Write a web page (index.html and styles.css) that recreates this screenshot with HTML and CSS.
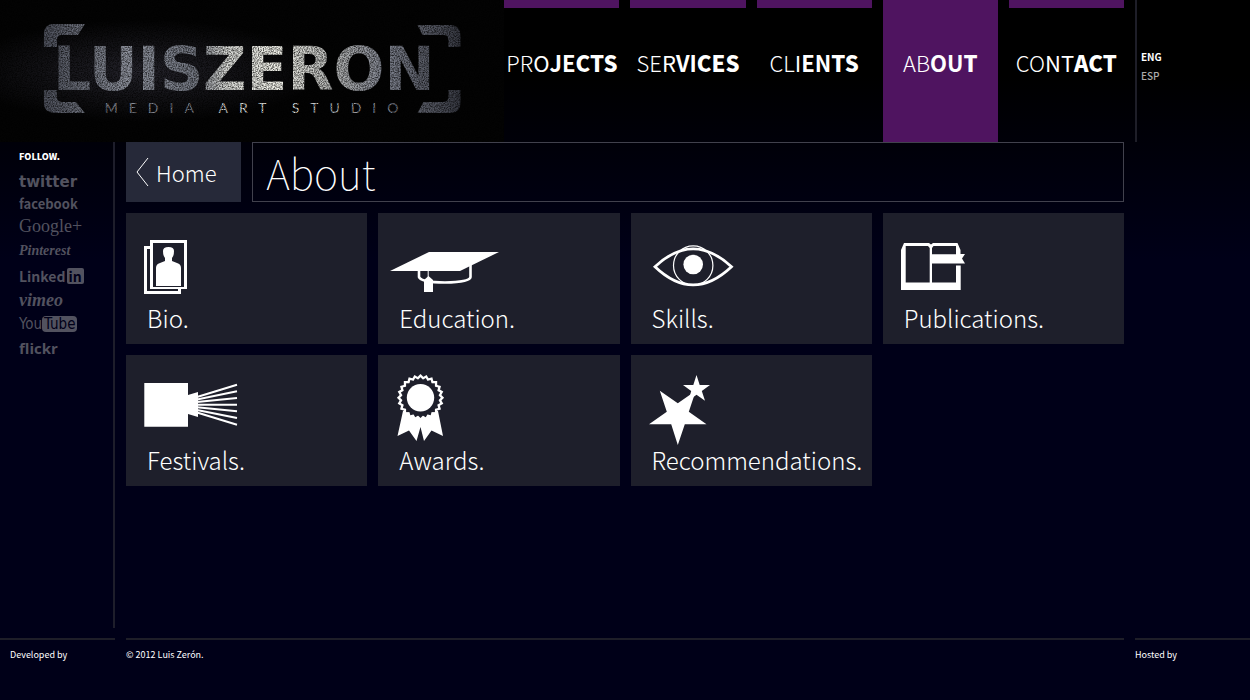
FILE: index.html
```html
<!DOCTYPE html>
<html lang="en">
	<head>
	<meta charset="utf-8" />
	<meta name="viewport" content="width=device-width, initial-scale=1"/>
	<title>Luis Zerón - About</title>
	<link rel="stylesheet" href="styles.css">
	</head>

	<body>
	<header class="top">
		<a class="logo" href="#">
			<svg viewBox="0 0 505 142">
				<defs>
					<linearGradient id="shine" gradientUnits="userSpaceOnUse" x1="44" y1="0" x2="462" y2="0">
						<stop offset="0" stop-color="#4b4e59"/>
						<stop offset=".2" stop-color="#8d919c"/>
						<stop offset=".36" stop-color="#747883"/>
						<stop offset=".44" stop-color="#d9dad6"/>
						<stop offset=".56" stop-color="#f0f0e8"/>
						<stop offset=".68" stop-color="#b9bab8"/>
						<stop offset=".82" stop-color="#7e828e"/>
						<stop offset="1" stop-color="#34363f"/>
					</linearGradient>
					<radialGradient id="glow" cx=".28" cy=".5" r=".36">
						<stop offset="0" stop-color="#25242c"/>
						<stop offset="1" stop-color="#030303"/>
					</radialGradient>
					<filter id="grain" x="0" y="0" width="100%" height="100%">
						<feTurbulence type="fractalNoise" baseFrequency=".8" numOctaves="2"/>
						<feColorMatrix values="0 0 0 0 0  0 0 0 0 0  0 0 0 0 0  1.6 0 0 0 -.55"/>
					</filter>
				</defs>
				<rect width="505" height="142" fill="url(#glow)"/>
				<g fill="url(#shine)">
					<path d="M44 47V34Q44 24 54 24H85L78 35H62Q57 35 57 40V47Z"/>
					<path d="M44 90H57V97Q57 102 63 102H76L85 113H56Q44 113 44 103Z"/>
					<path d="M418 25H450Q461 25 461 36V47H449V40Q449 35 444 35H423Z"/>
					<path d="M449 90H461V102Q461 113 450 113H418L424 102H443Q449 102 449 97Z"/>
					<text class="logo-name" x="53" y="90">LUISZERON</text>
					<text class="logo-line" x="105" y="113">MEDIA ART STUDIO</text>
				</g>
				<rect width="505" height="142" filter="url(#grain)"/>
			</svg>
		</a>
		<nav class="menu">
			<a href="#"><span><i>PR</i>O<b>JE</b><strong>CTS</strong></span></a>
			<a href="#"><span><i>SE</i>R<b>VI</b><strong>CES</strong></span></a>
			<a href="#"><span><i>CL</i>I<b>EN</b><strong>TS</strong></span></a>
			<a href="#" class="active"><span><i>AB</i><b>OU</b><strong>T</strong></span></a>
			<a href="#"><span><i>CO</i>NT<strong>ACT</strong></span></a>
		</nav>
		<div class="lang">
			<a href="#" class="current">ENG</a>
			<a href="#">ESP</a>
		</div>
	</header>

	<div class="middle">
		<aside class="follow">
			<h2>FOLLOW.</h2>
			<a href="#" class="twitter">twitter</a>
			<a href="#" class="facebook">facebook</a>
			<a href="#" class="google">Google+</a>
			<a href="#" class="pinterest">Pinterest</a>
			<a href="#" class="linkedin">Linked<span>in</span></a>
			<a href="#" class="vimeo">vimeo</a>
			<a href="#" class="youtube">You<span>Tube</span></a>
			<a href="#" class="flickr">flickr</a>
		</aside>

		<main class="content">
			<a class="back" href="#">
				<svg width="14" height="30" viewBox="0 0 14 30"><path d="M13 1L2 15L13 29" fill="none" stroke="#fff"/></svg>
				Home
			</a>
			<h1>About</h1>

			<a class="tile" href="#">
				<svg viewBox="0 0 125 90">
					<path d="M25 34.5H19.5V79.5H53.5V75" fill="none" stroke="#fff" stroke-width="3"/>
					<path fill-rule="evenodd" d="M24 27H61V76H24ZM27 30V74H58V30Z"/>
					<path d="M30 73V55Q30 51 34 50L39 48V45Q37 43 37 38Q37 34 42.500 34Q48 34 48 38Q48 43 46 45V48L51 50Q55 51 55 55V73Z"/>
				</svg>
				Bio.
			</a>
			<a class="tile" href="#">
				<svg viewBox="0 0 125 90">
					<path d="M12 58L51 39H121L82 58Z"/>
					<path d="M41 57V64Q43 69.500 67 69.500Q92 69 92.500 64V52" fill="none" stroke="#fff" stroke-width="2.600"/>
					<path d="M50.200 57V65" stroke="#fff"/>
					<path d="M46 79V67L50.500 63L55 67V79Z"/>
				</svg>
				Education.
			</a>
			<a class="tile" href="#">
				<svg viewBox="0 0 125 90">
					<path d="M24 53.700Q62 18 100.500 53.700Q62 90 24 53.700Z" fill="none" stroke="#fff" stroke-width="2.800"/>
					<circle cx="62.200" cy="52.500" r="19.700" fill="none" stroke="#fff" stroke-width="1.200"/>
					<circle cx="62.200" cy="51.500" r="9.800"/>
				</svg>
				Skills.
			</a>
			<a class="tile" href="#">
				<svg viewBox="0 0 125 90">
					<path fill-rule="evenodd" d="M18 77V37L21 30H46L48 31.500L50 30H74.500L77.500 37V41H82L79 45.500L82 50.500H49V69.500H73V52.500H77.700V77ZM22.700 35V69.500H46.700V35L45 33H22.700ZM49 35V41.300H73V33H50.500Z"/>
				</svg>
				Publications.
			</a>
			<a class="tile" href="#">
				<svg viewBox="0 0 125 90">
					<path d="M18.300 28H62V40L72 37V62L62 59V71.700H18.300Z"/>
					<path d="M71 42L111 29.700M71 44.500L111 36.300M71 47L111 43M71 49.700H111M71 52.300L111 56.300M71 55L111 63M71 57.500L111 69.700" stroke="#fff" stroke-width="2"/>
				</svg>
				Festivals.
			</a>
			<a class="tile" href="#">
				<svg viewBox="0 0 125 90">
					<defs>
						<rect id="sq" x="-1" y="-1" width="2" height="2"/>
						<g id="burst">
							<use href="#sq"/>
							<use href="#sq" transform="rotate(15)"/>
							<use href="#sq" transform="rotate(30)"/>
							<use href="#sq" transform="rotate(45)"/>
							<use href="#sq" transform="rotate(60)"/>
							<use href="#sq" transform="rotate(75)"/>
						</g>
					</defs>
					<path d="M25 56L19.500 81L31 75.500L38.500 86L42.500 72L46 86L53.500 75.500L65 81L60 56Z"/>
					<use href="#burst" transform="translate(42.500 42.700) scale(16.700)"/>
					<use href="#burst" transform="translate(42.500 42.700) scale(14.400)" fill="#1e1f2b"/>
					<circle cx="42.500" cy="42.700" r="13.700"/>
				</svg>
				Awards.
			</a>
			<a class="tile" href="#">
				<svg viewBox="0 0 125 90">
					<path d="M28.800 35.700L46.800 48.300L64.800 35.700L57.800 56.700L75.500 69.300H53.800L46.800 90L40.200 69.300H18L35.800 56.700Z"/>
					<path d="M65.500 20L68.700 30H79L70.800 36L74 45.700L65.500 39.700L57.500 45.700L60.200 36L52 30H62.300Z"/>
				</svg>
				Recommendations.
			</a>
		</main>
	</div>

	<footer class="bottom">
		<div class="dev">Developed by</div>
		<div class="copy">© 2012 Luis Zerón.</div>
		<div>Hosted by</div>
	</footer>
	</body>
</html>
```
FILE: styles.css
```css
* {box-sizing:border-box;}
body {	margin:0;
		min-height:100vh;
		display:flex;
		flex-direction:column;
		background:#000018 linear-gradient(#000 0, #000 75px, #000018 260px) no-repeat;
		color:#fff;
		font-family:"Noto Sans CJK SC", "Noto Sans", sans-serif;
}
a {color:inherit;text-decoration:none;}

/* every row shares the same ten columns */
.top, .middle, .bottom {display:grid;grid-template-columns:repeat(10, minmax(0, 1fr));column-gap:11px;}

.top {height:131px;margin-bottom:11px;}
.logo {grid-column:span 4;height:142px;margin-right:-11px;background:#030303;}
.logo svg {display:block;width:100%;height:142px;}
.logo-name {font:bold 60px "DejaVu Sans", sans-serif;}
.logo-line {font:14px Lato, sans-serif;letter-spacing:11px;}

.menu {grid-column:span 5;display:grid;grid-template-columns:repeat(5, minmax(0, 1fr));column-gap:11px;}
.menu a {	border-top:8px solid #4f1460;
			padding-top:39px;
			font-size:22px;
			line-height:30px;
			text-align:center;
			white-space:nowrap;
}
.menu .active {background:#4f1460;}
.menu i {font-style:normal;font-weight:200;}
.menu b {font-weight:700;}
.menu strong {font-weight:900;}

.lang {border-left:2px solid #1e1e28;padding:47px 0 0 4px;font-size:10px;line-height:19px;font-weight:500;color:#aaa;}
.lang a {display:block;}
.lang .current {color:#fff;font-weight:700;}

.middle {flex:1;}
.follow {	border-right:2px solid #1e1e2b;
			padding:6px 0 0 19px;
			display:flex;
			flex-direction:column;
			align-items:flex-start;
			color:#52525f;
}
.follow h2 {margin:0 0 4px;font-size:9px;line-height:18px;font-weight:900;color:#fff;}
.follow a {height:24px;line-height:24px;font-size:15px;font-weight:bold;white-space:nowrap;}
.follow .twitter {height:22px;font-family:"DejaVu Sans", sans-serif;}
.follow .facebook {height:22px;font-size:13px;}
.follow .google {font:18px/24px "Liberation Serif", serif;}
.follow .pinterest {height:26px;font:italic bold 14px/26px "Liberation Serif", serif;}
.follow .linkedin {font-size:14px;}
.follow span {background:#52525f;color:#000018;border-radius:2px;padding:0 2px;}
.follow .linkedin span {display:inline-block;line-height:16px;margin-left:1px;}
.follow .vimeo {font:italic bold 18px/24px "Liberation Serif", serif;}
.follow .youtube {font:15px/24px "DejaVu Sans Condensed", "Liberation Sans", sans-serif;}
.follow .youtube span {display:inline-block;line-height:16px;border-radius:4px;}
.follow .flickr {font-family:"Open Sans", sans-serif;}

.content {	grid-column:span 9;
			margin-right:calc((100% + 11px) / 9);
			display:grid;
			grid-template-columns:repeat(8, minmax(0, 1fr));
			grid-auto-rows:131px;
			grid-template-rows:60px;
			gap:11px;
}
.back {display:flex;align-items:center;gap:7px;padding-left:9px;background:#262939;font-size:22px;font-weight:300;}
h1 {	grid-column:span 7;
		margin:0;
		padding-left:13px;
		border:1px solid #41414d;
		font-size:41px;
		line-height:58px;
		font-weight:100;
}
.tile {grid-column:span 2;background:#1e1f2b;padding-left:21px;font-size:24px;line-height:30px;font-weight:300;white-space:nowrap;}
.tile svg {display:block;width:125px;height:90px;margin-left:-21px;fill:#fff;}

.bottom {height:62px;margin-top:10px;font-size:9px;line-height:14px;}
.bottom div {border-top:2px solid #1e1e28;padding-top:8px;}
.bottom .dev {padding-left:10px;}
.bottom .copy {grid-column:span 8;}
```
